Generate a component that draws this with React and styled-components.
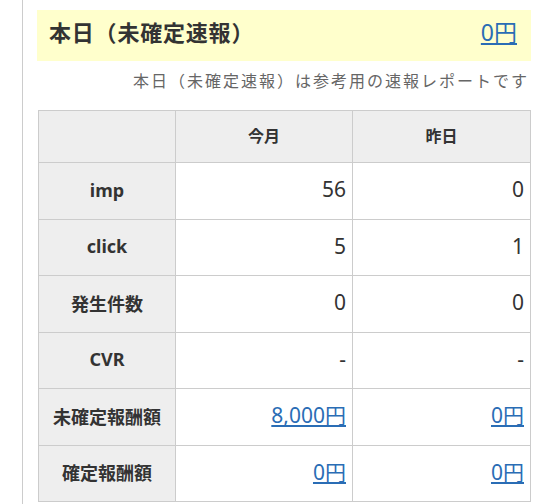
import styled, { createGlobalStyle } from "styled-components";

const GlobalStyle = createGlobalStyle`
    body {
        margin: 0;
        background: #fff;
        font-family: "Noto Sans", "Noto Sans CJK JP", sans-serif;
        color: #333;
    }
`;

const Page = styled.div`
    padding-left: 22px;
    min-height: 504px;
    box-sizing: border-box;
`;

const Content = styled.main`
    border-left: 1px solid #ccc;
    min-height: 504px;
    box-sizing: border-box;
    padding: 10px 10px 0 14px;
`;

const Banner = styled.div`
    display: flex;
    align-items: center;
    justify-content: space-between;
    height: 51px;
    box-sizing: border-box;
    padding: 0 14px 6px 12px;
    background: #ffffcc;
`;

const BannerTitle = styled.h2`
    margin: 0;
    font-size: 22px;
    line-height: 1.2;
    font-weight: bold;
    letter-spacing: 0.8px;
    color: #333;
`;

const MoneyLink = styled.a`
    color: #2a6db5;
    text-decoration: underline;
    font-size: ${({ $big }) => ($big ? "23px" : "21px")};
    line-height: 1.2;
`;

const Note = styled.p`
    margin: 8px 2px 0 0;
    text-align: right;
    font-size: 16px;
    letter-spacing: 2px;
    color: #666;
    line-height: 24px;
`;

const Table = styled.table`
    margin-top: 17px;
    margin-left: 1px;
    width: 493px;
    border-collapse: collapse;
    table-layout: fixed;
`;

const HeadCell = styled.th`
    background: #eee;
    border: 1px solid #ccc;
    height: ${({ $head }) => ($head ? "48px" : "53.5px")};
    padding: ${({ $head }) => ($head ? "0 4px 3px" : "0 4px 2px")};
    font-size: ${({ $head }) => ($head ? "16px" : "18px")};
    font-weight: bold;
    text-align: center;
    color: #333;
`;

const DataCell = styled.td`
    border: 1px solid #ccc;
    padding: 0 6px 3px;
    text-align: right;
    font-size: 21px;
    color: #333;
`;

const rows = [
    { label: "imp", month: "56", day: "0" },
    { label: "click", month: "5", day: "1" },
    { label: "発生件数", month: "0", day: "0" },
    { label: "CVR", month: "-", day: "-" },
    { label: "未確定報酬額", month: "8,000円", day: "0円", link: true },
    { label: "確定報酬額", month: "0円", day: "0円", link: true },
];

const Cell = ({ value, link }) => (
    <DataCell>{link ? <MoneyLink href="#">{value}</MoneyLink> : value}</DataCell>
);

const App = () => (
    <Page>
        <GlobalStyle />
        <Content>
            <Banner>
                <BannerTitle>本日（未確定速報）</BannerTitle>
                <MoneyLink href="#" $big>
                    0円
                </MoneyLink>
            </Banner>
            <Note>本日（未確定速報）は参考用の速報レポートです</Note>
            <Table>
                <colgroup>
                    <col style={{ width: 137 }} />
                    <col style={{ width: 177 }} />
                    <col />
                </colgroup>
                <thead>
                    <tr>
                        <HeadCell $head />
                        <HeadCell $head>今月</HeadCell>
                        <HeadCell $head>昨日</HeadCell>
                    </tr>
                </thead>
                <tbody>
                    {rows.map((row) => (
                        <tr key={row.label}>
                            <HeadCell>{row.label}</HeadCell>
                            <Cell value={row.month} link={row.link} />
                            <Cell value={row.day} link={row.link} />
                        </tr>
                    ))}
                </tbody>
            </Table>
        </Content>
    </Page>
);

export default App;
